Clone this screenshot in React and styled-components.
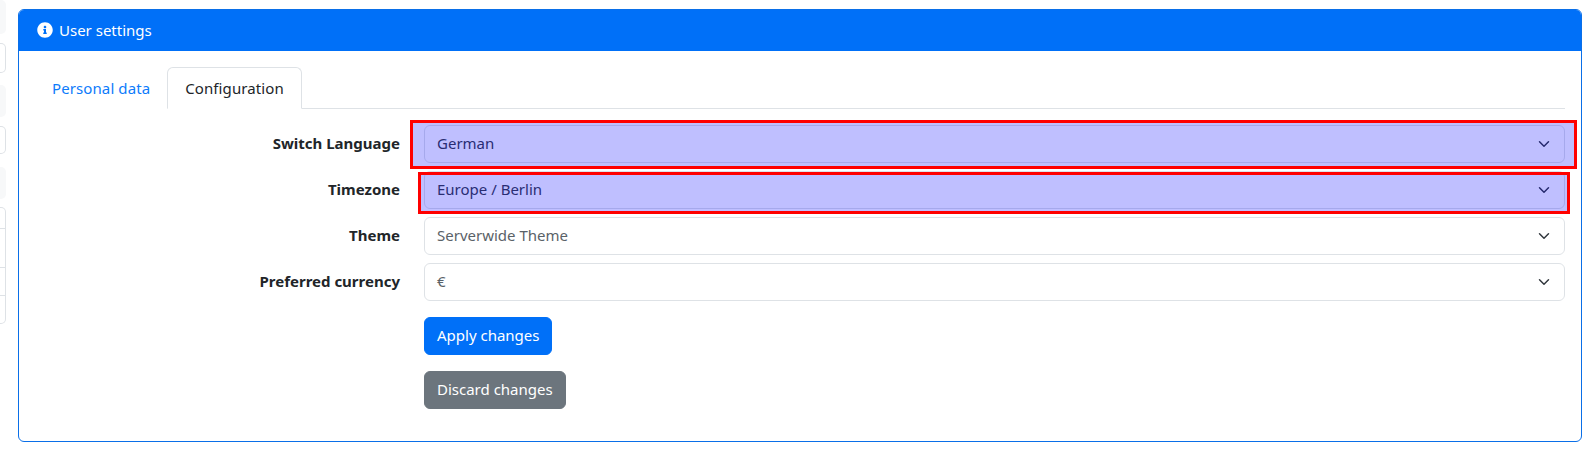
import React from "react";
import styled, { createGlobalStyle } from "styled-components";
import { FaInfoCircle } from "react-icons/fa";

const GlobalStyle = createGlobalStyle`
  html, body {
    margin: 0;
    padding: 0;
    background: #fff;
  }
  body {
    color: #212529;
    font-family: "Noto Sans", "Open Sans", sans-serif;
    font-size: 15px;
  }
`;

const Page = styled.div`
  display: flex;
  height: 450px;
  overflow: hidden;
`;

const Sidebar = styled.div`
  display: flex;
  flex-direction: column;
  width: 6px;
  margin-right: 12px;
`;

const SideHead = styled.div`
  background: #f7f8f9;
  height: ${({ $h }) => $h}px;
  margin-top: ${({ $top }) => $top || 0}px;
  border-radius: 0 5px 5px 0;
`;

const SideBox = styled.div`
  flex: none;
  box-sizing: border-box;
  background: #fff;
  border: 1px solid #dee2e6;
  border-left: 0;
  border-radius: 0 5px 5px 0;
  height: ${({ $h }) => $h}px;
  margin-top: 9px;
`;

const SideList = styled.div`
  flex: none;
  box-sizing: border-box;
  margin-top: 8px;
  border: 1px solid #dee2e6;
  border-left: 0;
  border-radius: 0 5px 5px 0;
`;

const SideRow = styled.div`
  box-sizing: border-box;
  height: ${({ $h }) => $h}px;
  border-top: ${({ $first }) => ($first ? "0" : "1px solid #dee2e6")};
`;

const Card = styled.section`
  width: 1564px;
  height: 433px;
  margin-top: 9px;
  box-sizing: border-box;
  border: 1px solid #0a6fe8;
  border-radius: 6px;
  overflow: hidden;
`;

const CardHeader = styled.header`
  display: flex;
  align-items: center;
  gap: 6px;
  height: 42px;
  margin: -1px -1px 0;
  padding: 0 19px;
  background: #0070f8;
  color: #fff;
`;

const CardBody = styled.div`
  padding: 16px 16px 0;
`;

const Tabs = styled.ul`
  display: flex;
  list-style: none;
  margin: 0;
  padding: 0;
  height: 41px;
  border-bottom: 1px solid #dee2e6;
`;

const Tab = styled.li`
  box-sizing: border-box;
  height: 42px;
  padding: 0 ${({ $active }) => ($active ? 17 : 16)}px 1px;
  display: flex;
  align-items: center;
  letter-spacing: 0.1px;
  border: 1px solid ${({ $active }) => ($active ? "#dee2e6" : "transparent")};
  border-bottom-color: ${({ $active }) => ($active ? "#fff" : "transparent")};
  border-radius: 6px 6px 0 0;
  background: #fff;
  color: ${({ $active }) => ($active ? "#212529" : "#0d7bfb")};
`;

const Form = styled.form`
  display: grid;
  grid-template-columns: 365px 1fr;
  column-gap: 24px;
  row-gap: 8px;
  margin-top: 16px;
`;

const Label = styled.label`
  font-weight: 700;
  text-align: right;
  line-height: 36px;
  height: 38px;
`;

const SelectBox = styled.div`
  box-sizing: border-box;
  height: 38px;
  padding: 0 14px 0 12px;
  display: flex;
  align-items: center;
  justify-content: space-between;
  border-radius: 6px;
  border: 1px solid #dee2e6;
  background: #fff;
  color: ${({ $muted }) => ($muted ? "#5a6268" : "#373c44")};
`;

const SelectValue = styled.span`
  margin-bottom: 2px;
`;

const Marked = styled.div`
  position: relative;
`;

// translucent blue box with a red frame, lying over the select
const Highlight = styled.span`
  position: absolute;
  pointer-events: none;
  box-sizing: border-box;
  top: ${({ $top }) => $top}px;
  bottom: ${({ $bottom }) => $bottom}px;
  left: ${({ $left }) => $left}px;
  right: ${({ $right }) => $right}px;
  border: 3px solid #f00;
  background: rgba(0, 0, 255, 0.25);
`;

const Actions = styled.div`
  grid-column: 2;
  display: flex;
  flex-direction: column;
  align-items: flex-start;
  gap: 16px;
  padding-top: 8px;
`;

const Button = styled.button`
  height: 38px;
  padding: 0 12px 2px;
  border: 1px solid ${({ $secondary }) => ($secondary ? "#6c757d" : "#0070f8")};
  border-radius: 6px;
  background: ${({ $secondary }) => ($secondary ? "#6c757d" : "#0070f8")};
  color: #fff;
  font: inherit;
`;

const ChevronIcon = styled.svg`
  width: 12px;
  height: 12px;
  fill: none;
  stroke: #343a40;
  stroke-width: 2;
  stroke-linecap: round;
  stroke-linejoin: round;
`;

function Select({ value, muted }) {
  return (
    <SelectBox $muted={muted}>
      <SelectValue>{value}</SelectValue>
      <ChevronIcon viewBox="0 0 16 16">
        <path d="m2 5 6 6 6-6" />
      </ChevronIcon>
    </SelectBox>
  );
}

function App() {
  return (
    <>
      <GlobalStyle />
      <Page>
        <Sidebar>
          <SideHead $h={34} />
          <SideBox $h={30} />
          <SideHead $h={32} $top={12} />
          <SideBox $h={28} />
          <SideHead $h={32} $top={13} />
          <SideList>
            <SideRow $h={20} $first />
            <SideRow $h={39} />
            <SideRow $h={28} />
            <SideRow $h={28} />
          </SideList>
        </Sidebar>
        <Card>
          <CardHeader>
            <FaInfoCircle size={16} />
            User settings
          </CardHeader>
          <CardBody>
            <Tabs>
              <Tab>Personal data</Tab>
              <Tab $active>Configuration</Tab>
            </Tabs>
            <Form>
              <Label>Switch Language</Label>
              <Marked>
                <Select value="German" />
                <Highlight $top={-5} $bottom={-6} $left={-14} $right={-12} />
              </Marked>
              <Label>Timezone</Label>
              <Marked>
                <Select value="Europe / Berlin" />
                <Highlight $top={1} $bottom={-5} $left={-6} $right={-5} />
              </Marked>
              <Label>Theme</Label>
              <Select value="Serverwide Theme" muted />
              <Label>Preferred currency</Label>
              <Select value="€" muted />
              <Actions>
                <Button type="button">Apply changes</Button>
                <Button type="button" $secondary>
                  Discard changes
                </Button>
              </Actions>
            </Form>
          </CardBody>
        </Card>
      </Page>
    </>
  );
}

export default App;
